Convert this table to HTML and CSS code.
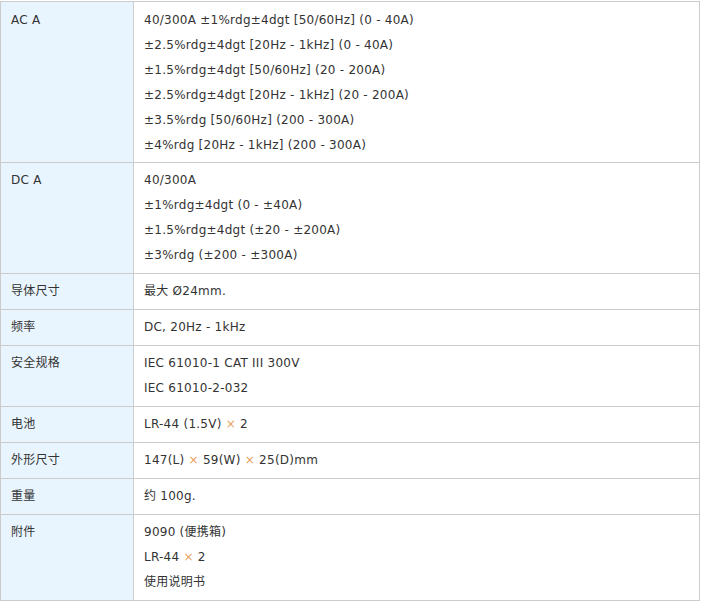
FILE: index.html
```html
<!DOCTYPE html>
<html lang="zh">
<head>
<meta charset="utf-8">
<title>Spec</title>
<link rel="stylesheet" href="styles.css">
</head>
<body>
<table class="spec">
  <colgroup><col class="c-label"><col class="c-value"></colgroup>
  <tbody>
    <tr class="first">
      <th>AC A</th>
      <td>
        <div class="ln">40/300A ±1%rdg±4dgt [50/60Hz] (0 - 40A)</div>
        <div class="ln">±2.5%rdg±4dgt [20Hz - 1kHz] (0 - 40A)</div>
        <div class="ln">±1.5%rdg±4dgt [50/60Hz] (20 - 200A)</div>
        <div class="ln">±2.5%rdg±4dgt [20Hz - 1kHz] (20 - 200A)</div>
        <div class="ln">±3.5%rdg [50/60Hz] (200 - 300A)</div>
        <div class="ln">±4%rdg [20Hz - 1kHz] (200 - 300A)</div>
      </td>
    </tr>
    <tr>
      <th>DC A</th>
      <td>
        <div class="ln">40/300A</div>
        <div class="ln">±1%rdg±4dgt (0 - ±40A)</div>
        <div class="ln">±1.5%rdg±4dgt (±20 - ±200A)</div>
        <div class="ln">±3%rdg (±200 - ±300A)</div>
      </td>
    </tr>
    <tr>
      <th>导体尺寸</th>
      <td><div class="ln">最大 Ø24mm.</div></td>
    </tr>
    <tr>
      <th>频率</th>
      <td><div class="ln">DC, 20Hz - 1kHz</div></td>
    </tr>
    <tr>
      <th>安全规格</th>
      <td>
        <div class="ln">IEC 61010-1 CAT III 300V</div>
        <div class="ln">IEC 61010-2-032</div>
      </td>
    </tr>
    <tr>
      <th>电池</th>
      <td><div class="ln">LR-44 (1.5V) <span class="x">×</span> 2</div></td>
    </tr>
    <tr>
      <th>外形尺寸</th>
      <td><div class="ln">147(L) <span class="x">×</span> 59(W) <span class="x">×</span> 25(D)mm</div></td>
    </tr>
    <tr>
      <th>重量</th>
      <td><div class="ln">约 100g.</div></td>
    </tr>
    <tr>
      <th>附件</th>
      <td>
        <div class="ln">9090 (便携箱)</div>
        <div class="ln">LR-44 <span class="x">×</span> 2</div>
        <div class="ln">使用说明书</div>
      </td>
    </tr>
  </tbody>
</table>
</body>
</html>
```

FILE: styles.css
```css
html, body {
  margin: 0;
  padding: 0;
  background: #ffffff;
}

body {
  font-family: "DejaVu Sans", "Noto Sans CJK SC", sans-serif;
  font-size: 12px;
  color: #333333;
}

.spec {
  margin-top: 1px;
  border-collapse: collapse;
  table-layout: fixed;
  width: 700px;
  border: 1px solid #cccccc;
}

.c-label { width: 133px; }

.spec th,
.spec td {
  border: 1px solid #cccccc;
  padding: 5px 10px;
  vertical-align: top;
  text-align: left;
  font-weight: normal;
  line-height: 25px;
  letter-spacing: 0.25px;
}

.spec .first th,
.spec .first td {
  padding-top: 6px;
  padding-bottom: 4px;
}

.spec th {
  background: #e9f5fe;
}

.ln {
  line-height: 25px;
  white-space: nowrap;
}

.x {
  color: #e8a060;
}
```
